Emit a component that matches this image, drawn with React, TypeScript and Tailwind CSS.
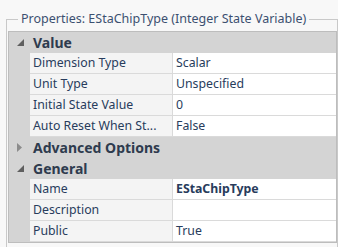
import React from "react";

type Row =
  | { kind: "cat"; label: string; open: boolean }
  | { kind: "prop"; label: string; value: string; bold?: boolean };

const rows: Row[] = [
  { kind: "cat", label: "Value", open: true },
  { kind: "prop", label: "Dimension Type", value: "Scalar" },
  { kind: "prop", label: "Unit Type", value: "Unspecified" },
  { kind: "prop", label: "Initial State Value", value: "0" },
  { kind: "prop", label: "Auto Reset When St...", value: "False" },
  { kind: "cat", label: "Advanced Options", open: false },
  { kind: "cat", label: "General", open: true },
  { kind: "prop", label: "Name", value: "EStaChipType", bold: true },
  { kind: "prop", label: "Description", value: "" },
  { kind: "prop", label: "Public", value: "True" },
];

function Glyph({ open }: { open: boolean }) {
  return open ? (
    <svg width="8" height="8" viewBox="0 0 8 8" className="ml-[8px]">
      <polygon points="7,0 7,7 0,7" fill="#5f5f5f" />
    </svg>
  ) : (
    <svg width="6" height="9" viewBox="0 0 6 9" className="ml-[8px]">
      <polygon points="0,0 5,4.5 0,9" fill="#8c8c8c" />
    </svg>
  );
}

export default function App() {
  return (
    <div
      className="w-[338px] h-[247px] overflow-hidden bg-[#f8f8f8]"
      style={{ fontFamily: '"Noto Sans", "Open Sans", sans-serif' }}
    >
      <fieldset className="ml-[6px] mt-[11px] w-[332px] border border-[#c9c9c9] pl-[1px] pr-0 pt-[4px] pb-[10px]">
        <legend className="ml-[10px] px-[3px] text-[12.5px] leading-[16px] text-[#3c5070]">
          Properties: EStaChipType (Integer State Variable)
        </legend>

        <div className="border border-[#bdbdbd] bg-[#d4d4d4]">
          {rows.map((r, i) =>
            r.kind === "cat" ? (
              <div key={i} className="flex h-[21px] items-center bg-[#d4d4d4]">
                <div className="w-[21px] flex items-center">
                  <Glyph open={r.open} />
                </div>
                <span className="pl-[3px] text-[14px] font-bold text-[#2e3b4e] leading-none">
                  {r.label}
                </span>
              </div>
            ) : (
              <div key={i} className="flex h-[21px]">
                <div className="w-[21px] shrink-0 bg-[#d4d4d4]" />
                <div className="w-[143px] shrink-0 border-b border-r border-[#dadada] bg-[#f4f4f4] pl-[3px] text-[12.3px] leading-[20px] text-[#283c5c] whitespace-nowrap overflow-hidden">
                  {r.label}
                </div>
                <div
                  className={`flex-1 border-b border-[#dadada] bg-white pl-[3px] text-[12.3px] leading-[20px] text-[#283c5c] whitespace-nowrap ${
                    r.bold ? "font-bold" : ""
                  }`}
                >
                  {r.value}
                </div>
              </div>
            )
          )}
        </div>
      </fieldset>
    </div>
  );
}
